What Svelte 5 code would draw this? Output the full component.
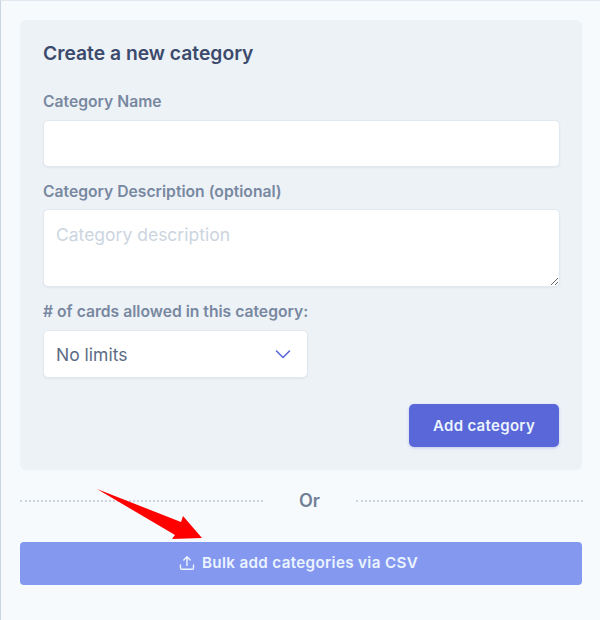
<script lang="ts">
let name = $state('');
let description = $state('');
</script>

<div class="page">
  <form class="panel" onsubmit={(e) => e.preventDefault()}>
    <h2>Create a new category</h2>

    <label for="cat-name">Category Name</label>
    <input id="cat-name" type="text" bind:value={name} />

    <label for="cat-desc" class="second">Category Description (optional)</label>
    <textarea id="cat-desc" placeholder="Category description" bind:value={description}></textarea>

    <label for="cat-limit" class="third">&#35; of cards allowed in this category:</label>
    <div id="cat-limit" class="select">
      <span>No limits</span>
      <svg width="16" height="16" viewBox="0 0 16 16" fill="none" stroke="#5a67d8" stroke-width="1.6" stroke-linecap="round" stroke-linejoin="round">
        <path d="M1.5 5 8 11.500 14.500 5" />
      </svg>
    </div>

    <div class="actions">
      <button class="add" type="submit">Add category</button>
    </div>
  </form>

  <div class="divider">
    <span class="dots left"></span>
    <span class="or">Or</span>
    <span class="dots"></span>
  </div>

  <div class="bulk-wrap">
    <button class="bulk" type="button">
      <svg width="16" height="16" viewBox="0 0 16 16" fill="none" stroke="currentColor" stroke-width="1.4" stroke-linecap="round" stroke-linejoin="round">
        <path d="M1.5 10v3a1.2 1.2 0 0 0 1.2 1.2h10.600a1.200 1.200 0 0 0 1.200-1.200v-3" />
        <path d="M8 10.500V2M4.800 5 8 1.800 11.200 5" />
      </svg>
      Bulk add categories via CSV
    </button>
    <!-- annotation arrow -->
    <svg class="arrow" width="112" height="56" viewBox="0 0 112 56">
      <path d="M1 1 85 34 87 28 106 50 76 51 79 47Z" fill="#ff0000" />
    </svg>
  </div>
</div>

<style>
  :global(body) {
    margin: 0;
    background: #f7fafc;
  }

  .page {
    box-sizing: border-box;
    width: 600px;
    height: 620px;
    padding: 20px 18px 0 20px;
    background: #f7fafc;
    border-left: 1px solid #cbd5e0;
    border-top: 1px solid #e2e8f0;
    font-family: Inter, "Noto Sans", sans-serif;
  }

  .panel {
    box-sizing: border-box;
    margin-left: -1px;
    margin-top: -1px;
    height: 450px;
    padding: 22px 23px 0;
    background: #edf2f7;
    border-radius: 6px;
    display: flex;
    flex-direction: column;
    align-items: flex-start;
  }

  h2 {
    margin: 0 0 29px;
    font-size: 19.3px;
    line-height: 22px;
    font-weight: 600;
    color: #3c4a6b;
  }

  label {
    font-size: 15.7px;
    line-height: 18px;
    font-weight: 600;
    color: #7888a0;
    margin-bottom: 9px;
  }

  .second {
    margin-top: 16px;
    margin-bottom: 8px;
  }

  .third {
    margin-top: 16px;
    margin-bottom: 9px;
  }

  input,
  textarea,
  .select {
    box-sizing: border-box;
    font-family: inherit;
    background: #fff;
    border: 1px solid #e2e8f0;
    border-radius: 5px;
    box-shadow: 0 1px 2px rgba(0, 0, 0, 0.05);
    outline: none;
  }

  input {
    width: 517px;
    height: 47px;
    margin: 0;
  }

  textarea {
    display: block;
    width: 517px;
    height: 78px;
    margin: 0;
    padding: 13px 12px;
    font-size: 17.5px;
    line-height: 24px;
  }

  textarea::placeholder {
    color: #cbd5e0;
    opacity: 1;
  }

  .select {
    width: 265px;
    height: 48px;
    padding: 0 16px 0 12px;
    display: flex;
    align-items: center;
    justify-content: space-between;
    font-size: 17.5px;
    color: #5d6b85;
  }

  .actions {
    align-self: stretch;
    display: flex;
    justify-content: flex-end;
    margin-top: 26px;
  }

  .add {
    width: 150px;
    height: 43px;
    padding: 0 0 1px;
    border: 0;
    border-radius: 5px;
    background: #5a67d8;
    box-shadow: 0 1px 3px rgba(90, 103, 216, 0.3);
    color: #ebf4ff;
    font: 600 15px Inter, "Noto Sans", sans-serif;
    letter-spacing: 0.32px;
  }

  .divider {
    display: flex;
    align-items: center;
    margin: 20px -1px 0 -1px;
    height: 22px;
  }

  .dots {
    flex: 1;
    border-top: 2px dotted #cbd5e0;
  }

  .dots.left {
    flex: none;
    width: 243px;
  }

  .or {
    width: 93px;
    padding-bottom: 2px;
    text-align: center;
    font-size: 18px;
    font-weight: 600;
    color: #718096;
  }

  .bulk-wrap {
    position: relative;
    margin: 30px 0 0 -1px;
  }

  .bulk {
    width: 562px;
    height: 43px;
    padding: 0 5px 2px 0;
    border: 0;
    border-radius: 4px;
    background: #8498f0;
    color: #ebf4ff;
    font: 600 15.2px Inter, "Noto Sans", sans-serif;
    letter-spacing: 0.35px;
    display: flex;
    align-items: center;
    justify-content: center;
    gap: 7px;
  }

  .arrow {
    position: absolute;
    left: 76px;
    top: -54px;
  }
</style>
